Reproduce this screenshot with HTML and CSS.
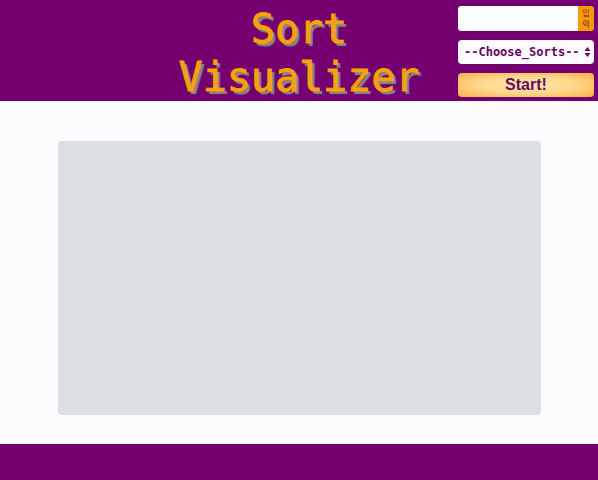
FILE: index.html
```html
<!DOCTYPE html>
<html>
<head>
<meta charset="utf-8">
<link rel="stylesheet" href="styles.css">
</head>
<body>
<header class="header">
  <div class="spacer"></div>
  <h1 class="title">Sort<br>Visualizer</h1>
  <div class="controls">
    <div class="input-row">
      <input class="num-input" type="text">
      <div class="input-btn"><span class="ko">입</span><span class="ko">력</span></div>
    </div>
    <div class="select-box">
      <span class="select-text">--Choose_Sorts--</span>
      <svg class="select-arrows" width="7" height="12" viewBox="0 0 7 12"><path d="M3.5 1 L6.5 5 H0.5 Z M3.5 11 L6.5 7 H0.5 Z" fill="#6a0068"/></svg>
    </div>
    <button class="start-btn">Start!</button>
  </div>
</header>
<main class="main">
  <div class="canvas"></div>
</main>
<footer class="footer"></footer>
</body>
</html>
```
FILE: styles.css
```css
* { box-sizing: border-box; }
html, body { margin: 0; padding: 0; }
body {
  width: 598px;
  height: 480px;
  background: #fcfbfd;
  display: flex;
  flex-direction: column;
  font-family: "DejaVu Sans Mono", monospace;
  overflow: hidden;
}
.header {
  height: 101px;
  background: #750070;
  display: grid;
  grid-template-columns: 1fr auto 1fr;
  align-items: start;
}
.title {
  margin: 5px 0 0 0;
  font-family: "DejaVu Sans Mono", monospace;
  font-size: 40px;
  font-weight: normal;
  line-height: 48px;
  color: #f7a20a;
  text-align: center;
  text-shadow: 3px 3px 1px #8a8a80;
  -webkit-text-stroke: 0.8px #f7a20a;
}
.controls {
  justify-self: end;
  width: 136px;
  margin: 6px 4px 0 0;
  display: flex;
  flex-direction: column;
  gap: 9px;
}
.input-row {
  display: flex;
  height: 25px;
  border-radius: 4px;
  overflow: hidden;
  background: #fff;
}
.num-input {
  flex: 1;
  min-width: 0;
  border: none;
  background: #fff;
  outline: none;
  padding: 0 4px;
}
.input-btn {
  width: 16px;
  background: #f79a00;
  display: flex;
  flex-direction: column;
  align-items: center;
  justify-content: center;
  gap: 1px;
}
.ko {
  display: block;
  color: #7a1a5a;
  font-family: "Noto Sans CJK KR", "Noto Sans CJK SC", sans-serif;
  font-size: 8px;
  line-height: 10px;
}
.select-box {
  height: 24px;
  background: #fbfafc;
  border-radius: 4px;
  display: flex;
  align-items: center;
  justify-content: space-between;
  padding: 0 3px 0 6px;
}
.select-text {
  font-family: "DejaVu Sans Mono", monospace;
  font-size: 12px;
  font-weight: bold;
  color: #6a0068;
  white-space: nowrap;
}
.select-arrows { display: block; }
.start-btn {
  height: 24px;
  border: none;
  border-radius: 4px;
  background: radial-gradient(ellipse at center, #ffe9b0 0%, #ffd78a 50%, #f9b04a 100%);
  color: #6a0a5e;
  font-family: "Liberation Sans", Arial, sans-serif;
  font-weight: bold;
  font-size: 16px;
  padding: 0;
}
.main {
  flex: 1;
  padding: 40px 57px 29px 58px;
  display: flex;
}
.canvas {
  flex: 1;
  background: #dce0e4;
  border-radius: 4px;
}
.footer {
  height: 36px;
  background: #750070;
}
```
